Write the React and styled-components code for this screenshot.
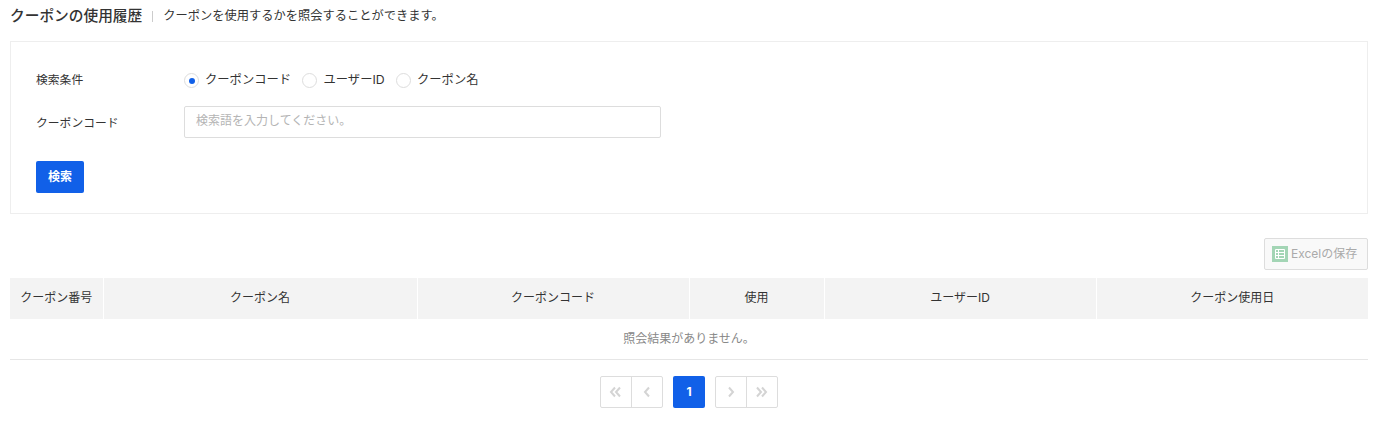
import React from 'react';
import styled, { createGlobalStyle } from 'styled-components';

const GlobalStyle = createGlobalStyle`
  html, body {
    margin: 0;
    padding: 0;
    background: #fff;
    font-family: Inter, "Noto Sans CJK JP", sans-serif;
    color: #333;
  }
`;

const Page = styled.div`
  width: 1386px;
  height: 428px;
  padding: 0 18px 0 10px;
  box-sizing: border-box;
  overflow: hidden;
`;

const TitleRow = styled.div`
  display: flex;
  align-items: center;
  height: 33px;
  padding-bottom: 2px;
  box-sizing: border-box;
`;

const Title = styled.h1`
  margin: 0;
  font-size: 14.7px;
  line-height: 20px;
  font-weight: 500;
  color: #333;
`;

const TitleDivider = styled.span`
  width: 1px;
  height: 11px;
  margin: 2px 10px 0;
  background: #ccc;
`;

const TitleNote = styled.p`
  margin: 0;
  font-size: 12.25px;
  line-height: 20px;
  color: #333;
`;

const SearchBox = styled.div`
  height: 173px;
  margin-top: 8px;
  padding: 21px 25px 0;
  box-sizing: border-box;
  border: 1px solid #eee;
`;

const FormRow = styled.div`
  display: flex;
  align-items: center;
  height: 32px;
  margin-bottom: ${p => p.$gap || 0}px;
`;

const FormLabel = styled.label`
  width: 148px;
  padding-bottom: ${p => p.$lift || 0}px;
  font-size: 11.8px;
  color: #333;
`;

const RadioGroup = styled.div`
  display: flex;
  align-items: center;
  gap: 11.4px;
`;

const RadioItem = styled.div`
  display: flex;
  align-items: center;
  gap: 6px;
  padding-top: 2px;
  font-size: 12.3px;
  line-height: 18px;
  color: #333;
`;

const RadioCircle = styled.span`
  display: flex;
  align-items: center;
  justify-content: center;
  width: 15px;
  height: 15px;
  margin-top: 1px;
  box-sizing: border-box;
  border: 1px solid #ddd;
  border-radius: 50%;
  background: #fff;

  &::after {
    content: '';
    display: ${p => (p.$checked ? 'block' : 'none')};
    width: 6px;
    height: 6px;
    border-radius: 50%;
    background: #1160e8;
  }
`;

const SearchInput = styled.input`
  width: 477px;
  height: 32px;
  padding: 0 11px 4px;
  box-sizing: border-box;
  border: 1px solid #ddd;
  border-radius: 2px;
  outline: none;
  font-family: inherit;
  font-size: 12px;

  &::placeholder {
    color: #b4b4b4;
    opacity: 1;
  }
`;

const SearchButton = styled.button`
  display: block;
  width: 48px;
  height: 32px;
  padding: 0 0 4px;
  border: 0;
  border-radius: 2px;
  background: #1160e8;
  color: #fff;
  font-family: inherit;
  font-size: 12px;
  font-weight: 700;
`;

const Toolbar = styled.div`
  display: flex;
  justify-content: flex-end;
  height: 32px;
  margin-top: 24px;
  margin-bottom: 8px;
`;

const ExcelButton = styled.button`
  display: flex;
  align-items: center;
  gap: 3px;
  width: 104px;
  height: 32px;
  padding: 0 0 0 7px;
  box-sizing: border-box;
  border: 1px solid #ddd;
  border-radius: 2px;
  background: #f9f9f9;
  color: #aaa;
  font-family: inherit;
  font-size: 12px;
`;

const ExcelLabel = styled.span`
  padding-bottom: 3px;
  white-space: nowrap;
`;

const ExcelIcon = styled.svg`
  flex: none;
  width: 16px;
  height: 16px;
`;

const Table = styled.table`
  width: 100%;
  table-layout: fixed;
  border-collapse: collapse;
`;

const HeadCell = styled.th`
  height: 41px;
  padding: 0 0 4px;
  box-sizing: border-box;
  background: #f3f3f3;
  border-left: 1px solid #fff;
  font-size: 12px;
  font-weight: 400;
  color: #333;

  &:first-child {
    border-left: 0;
  }
`;

const EmptyCell = styled.td`
  height: 40px;
  padding: 0 0 2px;
  box-sizing: border-box;
  border-bottom: 1px solid #e6e6e6;
  text-align: center;
  font-size: 12px;
  color: #888;
`;

const Pagination = styled.nav`
  display: flex;
  justify-content: center;
  align-items: center;
  gap: 10px;
  margin-top: 16px;
`;

const PageGroup = styled.div`
  display: flex;
  width: 63px;
  height: 32px;
  box-sizing: border-box;
  border: 1px solid #ddd;
  border-radius: 2px;
`;

const PageArrow = styled.span`
  display: flex;
  flex: 1;
  align-items: center;
  justify-content: center;
  color: #d4d4d4;

  & + & {
    border-left: 1px solid #ddd;
  }
`;

const CurrentPage = styled.span`
  display: flex;
  align-items: center;
  justify-content: center;
  width: 32px;
  height: 32px;
  border-radius: 2px;
  background: #1160e8;
  color: #fff;
  font-size: 12px;
  font-weight: 700;
`;

const Chevron = ({ dir, double }) => {
  const pts = x => (dir === 'left' ? `${x + 4},2.5 ${x},7 ${x + 4},11.5` : `${x},2.5 ${x + 4},7 ${x},11.5`);
  return (
    <svg width="14" height="14" viewBox="0 0 14 14" fill="none" stroke="currentColor" strokeWidth="2">
      {double ? (
        <>
          <polyline points={pts(2)} />
          <polyline points={pts(7)} />
        </>
      ) : (
        <polyline points={pts(5)} />
      )}
    </svg>
  );
};

const columns = [
  { label: 'クーポン番号', width: 93 },
  { label: 'クーポン名', width: 314 },
  { label: 'クーポンコード', width: 272 },
  { label: '使用', width: 135 },
  { label: 'ユーザーID', width: 272 },
  { label: 'クーポン使用日', width: 272 },
];

const radios = [
  { label: 'クーポンコード', checked: true },
  { label: 'ユーザーID' },
  { label: 'クーポン名' },
];

export default function App() {
  return (
    <Page>
      <GlobalStyle />
      <TitleRow>
        <Title>クーポンの使用履歴</Title>
        <TitleDivider />
        <TitleNote>クーポンを使用するかを照会することができます。</TitleNote>
      </TitleRow>

      <SearchBox>
        <FormRow $gap={11}>
          <FormLabel $lift={2}>検索条件</FormLabel>
          <RadioGroup>
            {radios.map(r => (
              <RadioItem key={r.label}>
                <RadioCircle $checked={r.checked} />
                {r.label}
              </RadioItem>
            ))}
          </RadioGroup>
        </FormRow>
        <FormRow $gap={23}>
          <FormLabel $lift={1}>クーポンコード</FormLabel>
          <SearchInput placeholder="検索語を入力してください。" />
        </FormRow>
        <SearchButton>検索</SearchButton>
      </SearchBox>

      <Toolbar>
        <ExcelButton disabled>
          <ExcelIcon viewBox="0 0 16 16">
            <rect width="16" height="16" fill="#a3d5b5" />
            <path d="M3.5 3.5h9v9h-9zM3.5 6.5h9M3.5 9.5h9M6.5 3.5v9" fill="none" stroke="#fff" />
          </ExcelIcon>
          <ExcelLabel>Excelの保存</ExcelLabel>
        </ExcelButton>
      </Toolbar>

      <Table>
        <colgroup>
          {columns.map(c => (
            <col key={c.label} width={c.width} />
          ))}
        </colgroup>
        <thead>
          <tr>
            {columns.map(c => (
              <HeadCell key={c.label}>{c.label}</HeadCell>
            ))}
          </tr>
        </thead>
        <tbody>
          <tr>
            <EmptyCell colSpan={6}>照会結果がありません。</EmptyCell>
          </tr>
        </tbody>
      </Table>

      <Pagination>
        <PageGroup>
          <PageArrow><Chevron dir="left" double /></PageArrow>
          <PageArrow><Chevron dir="left" /></PageArrow>
        </PageGroup>
        <CurrentPage>1</CurrentPage>
        <PageGroup>
          <PageArrow><Chevron dir="right" /></PageArrow>
          <PageArrow><Chevron dir="right" double /></PageArrow>
        </PageGroup>
      </Pagination>
    </Page>
  );
}
